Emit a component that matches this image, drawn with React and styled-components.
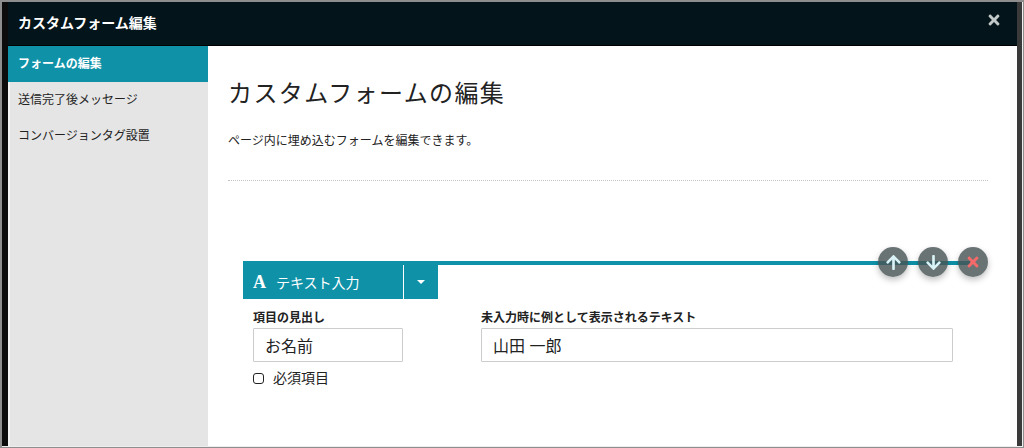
import styled, { createGlobalStyle } from "styled-components"
import { FaArrowUp, FaArrowDown, FaTimes } from "react-icons/fa"

const Global = createGlobalStyle`
	html, body {
		margin: 0;
		padding: 0;
		background: #fff;
	}
	* {
		box-sizing: border-box;
	}
`

const menuItems = ["フォームの編集", "送信完了後メッセージ", "コンバージョンタグ設置"]

export default function App() {
	return (
		<Frame>
			<Global />
			<Modal>
				<Header>
					<HeaderTitle>カスタムフォーム編集</HeaderTitle>
					<CloseButton><FaTimes size={16} /></CloseButton>
				</Header>
				<Body>
					<Sidebar>
						{menuItems.map((item, i) => (
							<MenuItem key={item} $active={i === 0}>{item}</MenuItem>
						))}
					</Sidebar>
					<Content>
						<Title>カスタムフォームの編集</Title>
						<Lead>ページ内に埋め込むフォームを編集できます。</Lead>
						<Divider />
						<Field>
							<FieldHead>
								<TypeBar>
									<TypeTab>
										<TypeName>
											<TypeGlyph>A</TypeGlyph>
											テキスト入力
										</TypeName>
										<TypeCaret><Caret /></TypeCaret>
									</TypeTab>
								</TypeBar>
								<Actions>
									<RoundButton><FaArrowUp size={17} /></RoundButton>
									<RoundButton><FaArrowDown size={17} /></RoundButton>
									<RoundButton $danger><FaTimes size={16} /></RoundButton>
								</Actions>
							</FieldHead>
							<Inputs>
								<Column $width={150}>
									<Label>項目の見出し</Label>
									<TextBox>お名前</TextBox>
									<Required>
										<Check />
										必須項目
									</Required>
								</Column>
								<Column $width={472}>
									<Label>未入力時に例として表示されるテキスト</Label>
									<TextBox>山田 一郎</TextBox>
								</Column>
							</Inputs>
						</Field>
					</Content>
				</Body>
			</Modal>
		</Frame>
	)
}

const Frame = styled.div`
	width: 1024px;
	height: 448px;
	overflow: hidden;
	background: #eee;
	border-style: solid;
	border-color: #8e8e8e;
	border-width: 2px 1px 1px 2px;
	font-family: "Liberation Sans", "Noto Sans CJK JP", sans-serif;
`

const Modal = styled.div`
	display: flex;
	flex-direction: column;
	height: calc(100% - 1px);
	margin-right: 1px;
	background: #03141a;
	border-left: 6px solid #0c0c0c;
	border-right: 5px solid #3a3a3a;
`

const Header = styled.div`
	height: 44px;
	flex: none;
	display: flex;
	align-items: center;
	justify-content: space-between;
	padding: 0 15px 4px 10px;
	border-bottom: 1px solid #000;
`

const HeaderTitle = styled.h1`
	margin: 0;
	font-size: 14px;
	font-weight: 700;
	color: #fff;
`

const CloseButton = styled.span`
	display: flex;
	color: #c3c8c9;
	margin-top: -3px;
`

const Body = styled.div`
	flex: 1;
	display: flex;
	background: #fff;
	min-height: 0;
`

const Sidebar = styled.nav`
	width: 200px;
	flex: none;
	background: #e5e5e5;
	border-left: 2px solid #f4f4f4;
`

const MenuItem = styled.div`
	height: 36px;
	display: flex;
	align-items: center;
	padding: 0 0 4px ${props => (props.$active ? "10px" : "8px")};
	margin-left: ${props => (props.$active ? "-2px" : "0")};
	font-size: 12px;
	font-weight: ${props => (props.$active ? 700 : 400)};
	color: ${props => (props.$active ? "#fff" : "#222")};
	background: ${props => (props.$active ? "#0f92a8" : "transparent")};
`

const Content = styled.main`
	flex: 1;
	padding: 30px 29px 0 20px;
	color: #222;
`

const Title = styled.h2`
	margin: 0;
	font-size: 24px;
	line-height: 36px;
	font-weight: 400;
	letter-spacing: 1.4px;
`

const Lead = styled.p`
	margin: 20px 0 0;
	font-size: 12px;
	line-height: 18px;
`

const Divider = styled.hr`
	margin: 30px 0 0;
	border: 0;
	border-top: 1px dotted #c4c4c4;
`

const Field = styled.section`
	margin: 80px 0 0 15px;
`

const FieldHead = styled.div`
	position: relative;
`

const TypeBar = styled.div`
	margin-right: 18px;
	border-top: 4px solid #0f92a8;
`

const TypeTab = styled.div`
	width: 195px;
	height: 34px;
	display: flex;
	align-items: stretch;
	background: #0f92a8;
	color: #fff;
`

const TypeName = styled.div`
	width: 161px;
	display: flex;
	align-items: center;
	gap: 10px;
	padding-left: 10px;
	font-size: 14px;
	border-right: 1px solid #fff;
`

const TypeGlyph = styled.span`
	font-family: "Liberation Serif", serif;
	font-weight: 700;
	font-size: 18px;
`

const TypeCaret = styled.div`
	flex: 1;
	display: flex;
	align-items: center;
	justify-content: center;
`

const Caret = styled.span`
	width: 0;
	height: 0;
	border-left: 4.5px solid transparent;
	border-right: 4.5px solid transparent;
	border-top: 4.5px solid #fff;
`

const Actions = styled.div`
	position: absolute;
	top: -14px;
	right: 0;
	display: flex;
	gap: 10px;
`

const RoundButton = styled.span`
	width: 30px;
	height: 30px;
	display: flex;
	align-items: center;
	justify-content: center;
	border-radius: 50%;
	background: rgba(72, 84, 86, 0.82);
	color: ${props => (props.$danger ? "#f46a6a" : "#d9f3f7")};
	box-shadow: 0 3px 6px rgba(0, 0, 0, 0.25);
`

const Inputs = styled.div`
	display: flex;
	gap: 78px;
	padding: 9px 0 0 10px;
`

const Column = styled.div`
	width: ${props => props.$width}px;
`

const Label = styled.div`
	font-size: 12px;
	line-height: 20px;
	font-weight: 700;
	color: #222;
`

const TextBox = styled.div`
	height: 34px;
	display: flex;
	align-items: center;
	padding-left: 11px;
	font-size: 16px;
	word-spacing: 0;
	color: #222;
	border: 1px solid #ccc;
	border-radius: 1px;
`

const Required = styled.div`
	display: flex;
	align-items: center;
	gap: 9px;
	margin-top: 7px;
	font-size: 14px;
	line-height: 18px;
	color: #222;
`

const Check = styled.span`
	width: 11px;
	height: 11px;
	border: 1.5px solid #222;
	border-radius: 3px;
`
